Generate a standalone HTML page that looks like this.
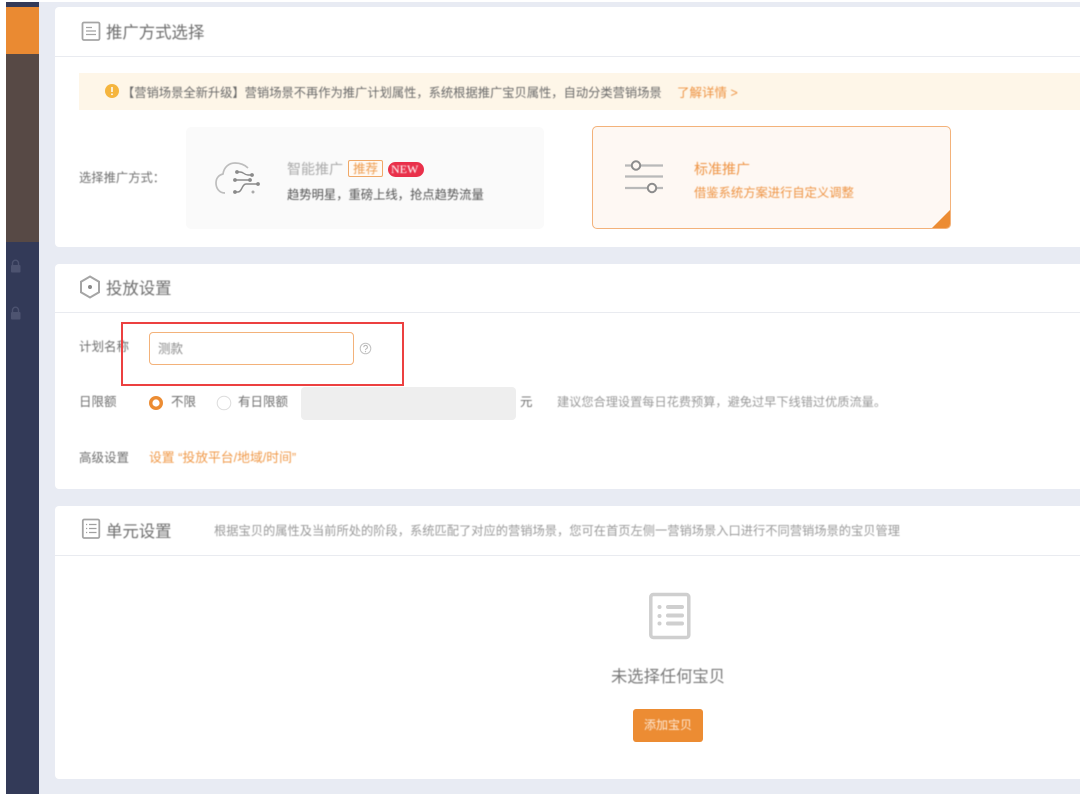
<!DOCTYPE html>
<html lang="zh">
<head>
<meta charset="utf-8">
<style>
html,body{margin:0;padding:0;background:#fff}
#p{position:relative;width:1080px;height:803px;overflow:hidden;background:#fff;font-family:"Liberation Sans","Noto Sans CJK SC",sans-serif;color:#666}
#p div,#p svg{position:absolute}
.t{white-space:nowrap;line-height:16px;filter:blur(.45px)}
.card{left:55px;width:1030px;background:#fff;border-radius:4px}
.line{left:55px;width:1025px;height:1px;background:#e9ebf0}
.h{font-size:16.400px;color:#6f6f6f}
.s{font-size:12.500px;color:#6f6f6f}
svg{filter:blur(.35px)}
</style>
</head>
<body>
<div id="p">
<div style="left:39px;top:2px;width:1041px;height:792px;background:#e8ebf3"></div>
<div style="left:6px;top:2px;width:33px;height:5px;background:#333a58"></div>
<div style="left:6px;top:7px;width:33px;height:47px;background:#ea8a32"></div>
<div style="left:6px;top:54px;width:33px;height:188px;background:#574945"></div>
<div style="left:6px;top:242px;width:33px;height:552px;background:#333a58"></div>

<svg style="left:9px;top:259px" width="13" height="14" viewBox="0 0 13 14"><path d="M3.500 6V4.200a3 3 0 0 1 6 0V6" fill="none" stroke="#4d5370" stroke-width="1.400"/><rect x="2" y="6" width="9.500" height="7.500" rx="1" fill="#4d5370"/></svg>
<svg style="left:9px;top:306px" width="13" height="14" viewBox="0 0 13 14"><path d="M3.500 6V4.200a3 3 0 0 1 6 0V6" fill="none" stroke="#4d5370" stroke-width="1.400"/><rect x="2" y="6" width="9.500" height="7.500" rx="1" fill="#4d5370"/></svg>

<div class="card" style="top:7px;height:240px"></div>
<div class="card" style="top:264px;height:225px"></div>
<div class="card" style="top:506px;height:273px"></div>
<div class="line" style="top:56px"></div>
<div class="line" style="top:312px"></div>
<div class="line" style="top:555px"></div>

<svg style="left:81px;top:21px" width="20" height="20" viewBox="0 0 20 20"><rect x="1.500" y="1.500" width="17" height="17.500" rx="1.500" fill="none" stroke="#a5a5a5" stroke-width="1.800"/><path d="M5 6.500h6M5 10h10M5 13.500h10" stroke="#a5a5a5" stroke-width="1.300" fill="none"/></svg>
<div class="t h" style="left:106px;top:25px">推广方式选择</div>

<div style="left:79px;top:73px;width:1001px;height:37px;background:#fef6e8"></div>
<svg style="left:104px;top:83px" width="16" height="16" viewBox="0 0 16 16"><circle cx="8" cy="8" r="7" fill="#f5b53e"/><path d="M8 4v5" stroke="#fff" stroke-width="1.500"/><circle cx="8" cy="11.300" r=".9" fill="#fff"/></svg>
<div class="t" style="left:122px;top:85px;font-size:12.270px;color:#6a6a6a">【营销场景全新升级】营销场景不再作为推广计划属性，系统根据推广宝贝属性，自动分类营销场景</div>
<div class="t" style="left:677px;top:85px;font-size:12.500px;color:#ee9444">了解详情 &gt;</div>

<div class="t" style="left:79px;top:170px;font-size:12.300px;color:#6f6f6f">选择推广方式：</div>
<div style="left:186px;top:127px;width:358px;height:102px;background:#fafafa;border-radius:5px"></div>
<svg style="left:212px;top:158px" width="50" height="40" viewBox="0 0 50 40">
<path d="M13 35C7 35 4 30 4 25C4 20 7 17 11 16C12 9 17 5 23 5C29 5 33 7 36 10" fill="none" stroke="#bdbdbd" stroke-width="1.700"/>
<path d="M25 14h3c4 0 4 3 8 3h4M23 22h15M23 34h3c4 0 4-8 8-8h12" fill="none" stroke="#8a8a8a" stroke-width="1.400"/>
<circle cx="25" cy="14" r="1.900" fill="#8a8a8a"/><circle cx="40" cy="17" r="1.900" fill="#8a8a8a"/><circle cx="23" cy="22" r="1.900" fill="#8a8a8a"/><circle cx="38" cy="22" r="1.900" fill="#8a8a8a"/><circle cx="23" cy="34" r="1.900" fill="#8a8a8a"/><circle cx="46" cy="26" r="1.900" fill="#8a8a8a"/><circle cx="41" cy="34" r="1.500" fill="#aaa"/>
</svg>
<div class="t" style="left:287px;top:161px;font-size:14px;color:#aaa">智能推广</div>
<div style="left:348px;top:160px;width:33px;height:15px;border:1px solid #f0a968;border-radius:2px;background:#fffaf5"></div>
<div class="t" style="left:353px;top:161px;font-size:12.500px;color:#ee9c4e">推荐</div>
<div style="left:388px;top:162px;width:36px;height:15px;background:#e9304a;border-radius:8px"></div>
<div class="t" style="left:391px;top:162px;font-family:'Liberation Serif',serif;font-size:12px;line-height:15px;color:#fff">NEW</div>
<div class="t" style="left:287px;top:187px;font-size:12.300px;color:#555">趋势明星，重磅上线，抢点趋势流量</div>

<div style="left:592px;top:126px;width:357px;height:101px;background:#fef8f3;border:1px solid #f3b27a;border-radius:5px;overflow:hidden">
<svg style="left:0;top:0" width="357" height="101"><path d="M358 82V102H338Z" fill="#ec8c33"/></svg>
</div>
<svg style="left:620px;top:157px" width="46" height="40" viewBox="0 0 46 40">
<path d="M5 8.500h38M5 19.500h38M5 31h38" stroke="#b9b9b9" stroke-width="2.200" fill="none"/>
<circle cx="16" cy="8.500" r="4.200" fill="#fef8f3" stroke="#8c8c8c" stroke-width="2"/>
<circle cx="32" cy="31" r="4.200" fill="#fef8f3" stroke="#8c8c8c" stroke-width="2"/>
</svg>
<div class="t" style="left:694px;top:161px;font-size:14px;color:#ee9444">标准推广</div>
<div class="t" style="left:694px;top:185px;font-size:12.300px;color:#ee9444">借鉴系统方案进行自定义调整</div>

<svg style="left:79px;top:275px" width="22" height="24" viewBox="0 0 22 24"><path d="M11 1.500 20 6.700v10.600L11 22.500 2 17.300V6.700Z" fill="none" stroke="#a5a5a5" stroke-width="2"/><circle cx="11" cy="12" r="2" fill="#8a8a8a"/></svg>
<div class="t h" style="left:106px;top:281px">投放设置</div>

<div class="t s" style="left:79px;top:339px">计划名称</div>
<div style="left:149px;top:332px;width:203px;height:31px;border:1px solid #f3b27a;border-radius:4px;background:#fff"></div>
<div class="t s" style="left:158px;top:341px;color:#888">测款</div>
<svg style="left:359px;top:342px" width="13" height="13" viewBox="0 0 13 13"><circle cx="6.500" cy="6.500" r="5.300" fill="none" stroke="#c2c2c2"/><path d="M4.800 5.200a1.800 1.800 0 1 1 2.500 1.600c-.6.300-.8.700-.8 1.300" fill="none" stroke="#b5b5b5"/><circle cx="6.500" cy="9.600" r=".6" fill="#b5b5b5"/></svg>
<div style="left:121px;top:322px;width:279px;height:60px;border:2px solid #ec4040"></div>

<div class="t s" style="left:79px;top:394px">日限额</div>
<svg style="left:148px;top:395px" width="16" height="16" viewBox="0 0 16 16"><circle cx="8" cy="8" r="5.300" fill="#fff" stroke="#ec8c33" stroke-width="3.400"/></svg>
<div class="t s" style="left:171px;top:394px">不限</div>
<svg style="left:216px;top:395px" width="16" height="16" viewBox="0 0 16 16"><circle cx="8" cy="8" r="6.800" fill="#fff" stroke="#dcdcdc"/></svg>
<div class="t s" style="left:238px;top:394px">有日限额</div>
<div style="left:301px;top:387px;width:215px;height:33px;background:#eeeeee;border-radius:4px"></div>
<div class="t s" style="left:520px;top:394px">元</div>
<div class="t" style="left:557px;top:394px;font-size:12.200px;color:#9a9a9a">建议您合理设置每日花费预算，避免过早下线错过优质流量。</div>

<div class="t s" style="left:79px;top:450px">高级设置</div>
<div class="t" style="left:149px;top:450px;font-size:12.800px;color:#f09a4a">设置 “投放平台/地域/时间”</div>

<svg style="left:81px;top:518px" width="20" height="22" viewBox="0 0 20 22"><rect x="1.800" y="1.500" width="16.500" height="18.500" rx="1.500" fill="none" stroke="#a5a5a5" stroke-width="1.800"/><path d="M5 6.500h1.200M5 10.500h1.200M5 14.500h1.200M8 6.500h7.500M8 10.500h7.500M8 14.500h7.500" stroke="#a0a0a0" stroke-width="1.300"/></svg>
<div class="t h" style="left:106px;top:524px">单元设置</div>
<div class="t" style="left:214px;top:523px;font-size:12.250px;color:#9a9a9a">根据宝贝的属性及当前所处的阶段，系统匹配了对应的营销场景，您可在首页左侧一营销场景入口进行不同营销场景的宝贝管理</div>

<svg style="left:648px;top:592px" width="44" height="48" viewBox="0 0 44 48"><rect x="2.800" y="2.500" width="38" height="43" rx="2.500" fill="none" stroke="#cfcfcf" stroke-width="3.500"/><circle cx="11.500" cy="15" r="2" fill="#cfcfcf"/><circle cx="11.500" cy="24" r="2" fill="#cfcfcf"/><circle cx="11.500" cy="31.500" r="2" fill="#cfcfcf"/><path d="M20 15h14M20 23.500h14M20 31.500h14" stroke="#cfcfcf" stroke-width="4" stroke-linecap="round"/></svg>
<div class="t" style="left:611px;top:669px;font-size:16.300px;color:#7a7a7a">未选择任何宝贝</div>
<div style="left:633px;top:709px;width:70px;height:33px;background:#ec8c33;border-radius:3px"></div>
<div class="t" style="left:644px;top:717px;font-size:12px;color:#fde9d6">添加宝贝</div>
</div>
</body>
</html>
